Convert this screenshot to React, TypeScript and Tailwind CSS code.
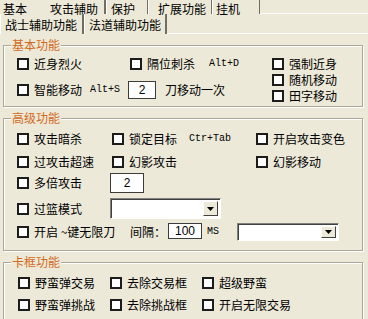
import React from "react";

const cjk = "font-['Noto_Sans_CJK_SC','Noto_Sans',sans-serif]";
const mono = "font-['Liberation_Mono',monospace] text-[10px] leading-[12px]";

const Check: React.FC<{ label: React.ReactNode; className?: string }> = ({ label, className = "" }) => (
  <div className={`flex items-center gap-[5px] ${className}`}>
    <span className="w-[12px] h-[12px] shrink-0 border-2 border-[#1c1c1c] bg-white" />
    <span className="whitespace-nowrap">{label}</span>
  </div>
);

const Field: React.FC<{ value: string; className?: string }> = ({ value, className = "" }) => (
  <div
    className={`flex items-center justify-center bg-white border border-[#3c3c3c] font-['Liberation_Sans',sans-serif] text-[12px] ${className}`}
  >
    {value}
  </div>
);

const Combo: React.FC<{ className?: string }> = ({ className = "" }) => (
  <div
    className={`flex bg-white border border-t-[#808080] border-l-[#808080] border-b-white border-r-white shadow-[inset_1px_1px_0_#404040] ${className}`}
  >
    <div className="flex-1" />
    <div className="w-[15px] my-[2px] mr-[2px] flex items-center justify-center bg-[#ECE9D8] border border-t-white border-l-white border-b-[#404040] border-r-[#404040]">
      <svg width="7" height="4" viewBox="0 0 7 4">
        <path d="M0 0h7L3.5 4z" fill="#000" />
      </svg>
    </div>
  </div>
);

const Group: React.FC<{ title: string; className?: string; children: React.ReactNode }> = ({
  title,
  className = "",
  children,
}) => (
  <div
    className={`relative ml-[3px] w-[360px] mt-[11px] border border-[#ACA899] shadow-[inset_1px_1px_0_#fff,1px_1px_0_#fff] ${className}`}
  >
    <span className="absolute -top-[8px] left-[7px] px-[1px] bg-[#ECE9D8] text-[#D4691E] leading-[14px]">
      {title}
    </span>
    {children}
  </div>
);

export default function App() {
  return (
    <div className={`w-[368px] h-[319px] overflow-hidden bg-[#ECE9D8] text-black text-[12px] leading-[14px] ${cjk}`}>
      {/* main tabs */}
      <div className="flex h-[14px]">
        <div className="w-[44px] pl-[3px] pt-[2px]">基本</div>
        <div className="w-[62px] pl-[6px] pt-[2px] border-r-2 border-r-[#716F64]">攻击辅助</div>
        <div className="w-[42px] pl-[4px] pt-[2px] border-l border-l-white border-r border-r-[#716F64]">保护</div>
        <div className="w-[64px] pl-[9px] pt-[2px] border-l border-l-white border-r border-r-[#716F64]">扩展功能</div>
        <div className="w-[48px] pl-[3px] pt-[2px] border-l border-l-white border-r border-r-[#716F64]">挂机</div>
        <div className="flex-1 border-b border-white" />
      </div>

      {/* sub tabs */}
      <div className="flex h-[20px]">
        <div className="w-[84px] pl-[4px] pt-[4px] border-l border-l-white border-r-2 border-r-[#716F64]">
          战士辅助功能
        </div>
        <div className="w-[83px] pl-[4px] pt-[4px] border-l border-l-white border-r-2 border-r-[#716F64]">
          法道辅助功能
        </div>
        <div className="flex-1 border-b border-white" />
      </div>

      <Group title="基本功能" className="h-[62px]">
        <div className="flex pl-[13px] pt-[8px]">
          <div className="w-[255px]">
            <div className="flex h-[20px] items-center">
              <Check label="近身烈火" className="w-[113px]" />
              <Check label="隔位刺杀" />
              <span className={`${mono} ml-[14px]`}>Alt+D</span>
            </div>
            <div className="flex h-[20px] items-center mt-[6px]">
              <Check label="智能移动" />
              <span className={`${mono} ml-[8px]`}>Alt+S</span>
              <Field value="2" className="ml-[8px] w-[28px] h-[18px]" />
              <span className="ml-[9px]">刀移动一次</span>
            </div>
          </div>
          <div className="flex flex-col pt-[2px]">
            <Check label="强制近身" className="h-[16px]" />
            <Check label="随机移动" className="h-[16px]" />
            <Check label="田字移动" className="h-[16px]" />
          </div>
        </div>
      </Group>

      <Group title="高级功能" className="h-[133px]">
        <div className="flex flex-col pl-[13px] pt-[10px]">
          <div className="flex h-[20px] items-center">
            <Check label="攻击暗杀" className="w-[95px]" />
            <div className="flex items-center w-[144px]">
              <Check label="锁定目标" />
              <span className={`${mono} ml-[12px]`}>Ctr+Tab</span>
            </div>
            <Check label="开启攻击变色" />
          </div>
          <div className="flex h-[20px] items-center mt-[3px]">
            <Check label="过攻击超速" className="w-[95px]" />
            <Check label="幻影攻击" className="w-[144px]" />
            <Check label="幻影移动" />
          </div>
          <div className="flex h-[20px] items-center mt-[1px]">
            <Check label="多倍攻击" className="w-[93px]" />
            <Field value="2" className="w-[34px] h-[20px]" />
          </div>
          <div className="flex h-[21px] items-center mt-[5px]">
            <Check label="过篮模式" className="w-[93px]" />
            <Combo className="w-[111px] h-[21px]" />
          </div>
          <div className="flex h-[20px] items-center mt-[3px]">
            <Check label="开启 ~键无限刀" className="w-[113px]" />
            <span className="w-[38px]">间隔：</span>
            <Field value="100" className="w-[34px] h-[16px] -mt-[3px]" />
            <span className={`${mono} ml-[5px] w-[30px]`}>MS</span>
            <Combo className="w-[102px] h-[18px]" />
          </div>
        </div>
      </Group>

      <Group title="卡框功能" className="h-[80px]">
        <div className="flex flex-col pl-[14px] pt-[10px]">
          <div className="flex h-[20px] items-center">
            <Check label="野蛮弹交易" className="w-[92px]" />
            <Check label="去除交易框" className="w-[92px]" />
            <Check label="超级野蛮" />
          </div>
          <div className="flex h-[20px] items-center mt-[2px]">
            <Check label="野蛮弹挑战" className="w-[92px]" />
            <Check label="去除挑战框" className="w-[92px]" />
            <Check label="开启无限交易" />
          </div>
        </div>
      </Group>
    </div>
  );
}
